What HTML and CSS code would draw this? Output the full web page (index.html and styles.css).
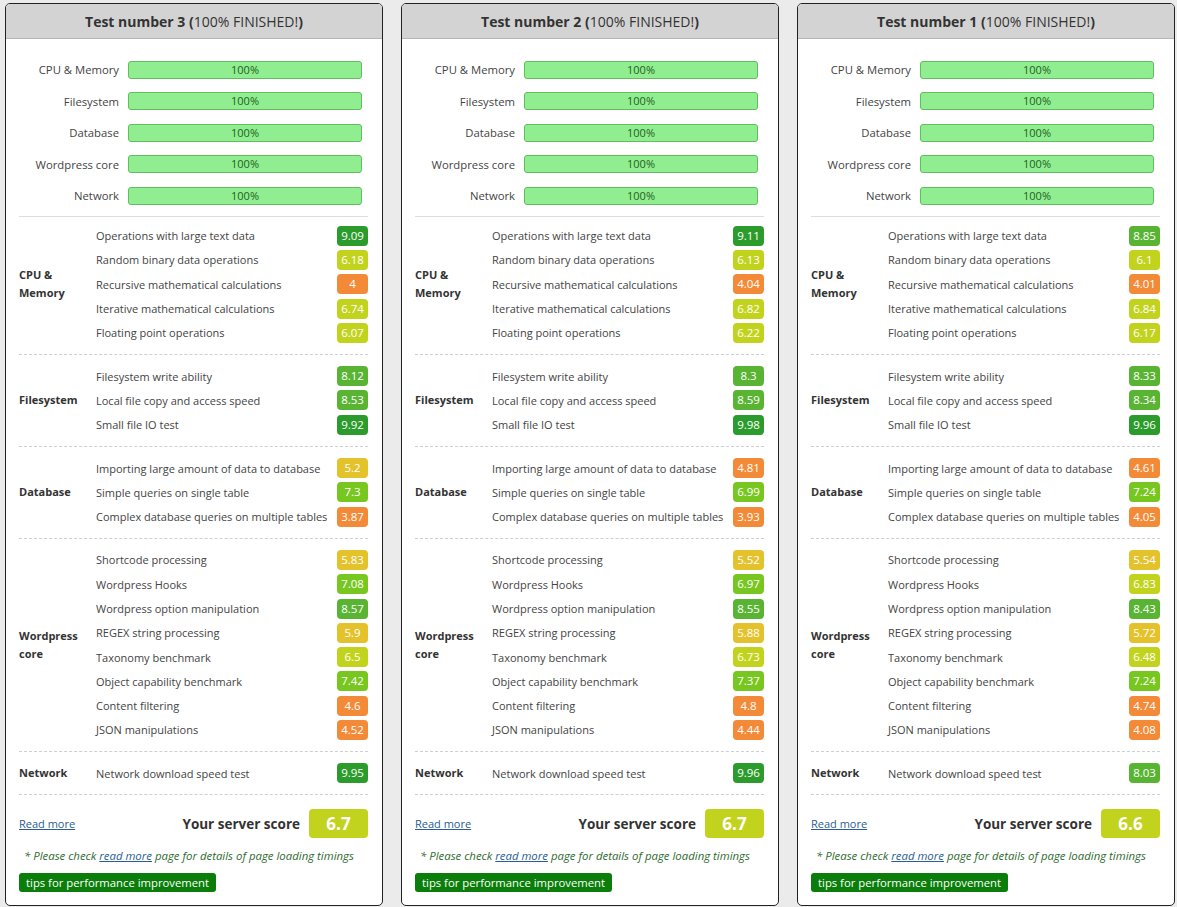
FILE: index.html
```html
<!DOCTYPE html>
<html lang="en">
<head>
    <meta charset="UTF-8">
    <title>Benchmark results</title>
    <link rel="stylesheet" href="styles.css">
</head>
<body>
<div class="tests">

    <!-- test 3 -->
    <div class="test">
        <div class="test-head"><b>Test number 3</b>&nbsp;<b>(</b>100% FINISHED!<b>)</b></div>
        <div class="test-body">
            <div class="progress">
                <div class="prog-row"><span class="prog-label">CPU &amp; Memory</span><div class="bar">100%</div></div>
                <div class="prog-row"><span class="prog-label">Filesystem</span><div class="bar">100%</div></div>
                <div class="prog-row"><span class="prog-label">Database</span><div class="bar">100%</div></div>
                <div class="prog-row"><span class="prog-label">Wordpress core</span><div class="bar">100%</div></div>
                <div class="prog-row"><span class="prog-label">Network</span><div class="bar">100%</div></div>
            </div>
            <div class="group first">
                <div class="cat">CPU &amp;<br>Memory</div>
                <div class="items">
                    <div class="row"><span>Operations with large text data</span><span class="score g9">9.09</span></div>
                    <div class="row"><span>Random binary data operations</span><span class="score g6">6.18</span></div>
                    <div class="row"><span>Recursive mathematical calculations</span><span class="score g4">4</span></div>
                    <div class="row"><span>Iterative mathematical calculations</span><span class="score g6">6.74</span></div>
                    <div class="row"><span>Floating point operations</span><span class="score g6">6.07</span></div>
                </div>
            </div>
            <div class="group">
                <div class="cat">Filesystem</div>
                <div class="items">
                    <div class="row"><span>Filesystem write ability</span><span class="score g8">8.12</span></div>
                    <div class="row"><span>Local file copy and access speed</span><span class="score g8">8.53</span></div>
                    <div class="row"><span>Small file IO test</span><span class="score g9">9.92</span></div>
                </div>
            </div>
            <div class="group">
                <div class="cat">Database</div>
                <div class="items">
                    <div class="row"><span>Importing large amount of data to database</span><span class="score g5">5.2</span></div>
                    <div class="row"><span>Simple queries on single table</span><span class="score g7">7.3</span></div>
                    <div class="row"><span>Complex database queries on multiple tables</span><span class="score g4">3.87</span></div>
                </div>
            </div>
            <div class="group">
                <div class="cat">Wordpress<br>core</div>
                <div class="items">
                    <div class="row"><span>Shortcode processing</span><span class="score g5">5.83</span></div>
                    <div class="row"><span>Wordpress Hooks</span><span class="score g7">7.08</span></div>
                    <div class="row"><span>Wordpress option manipulation</span><span class="score g8">8.57</span></div>
                    <div class="row"><span>REGEX string processing</span><span class="score g5">5.9</span></div>
                    <div class="row"><span>Taxonomy benchmark</span><span class="score g6">6.5</span></div>
                    <div class="row"><span>Object capability benchmark</span><span class="score g7">7.42</span></div>
                    <div class="row"><span>Content filtering</span><span class="score g4">4.6</span></div>
                    <div class="row"><span>JSON manipulations</span><span class="score g4">4.52</span></div>
                </div>
            </div>
            <div class="group">
                <div class="cat">Network</div>
                <div class="items">
                    <div class="row"><span>Network download speed test</span><span class="score g9">9.95</span></div>
                </div>
            </div>
            <div class="summary">
                <a href="#" class="read-more">Read more</a>
                <span class="total-label">Your server score</span>
                <span class="total g6">6.7</span>
            </div>
            <p class="note">* Please check <a href="#">read more</a> page for details of page loading timings</p>
            <a href="#" class="tips">tips for performance improvement</a>
        </div>
    </div>

    <!-- test 2 -->
    <div class="test">
        <div class="test-head"><b>Test number 2</b>&nbsp;<b>(</b>100% FINISHED!<b>)</b></div>
        <div class="test-body">
            <div class="progress">
                <div class="prog-row"><span class="prog-label">CPU &amp; Memory</span><div class="bar">100%</div></div>
                <div class="prog-row"><span class="prog-label">Filesystem</span><div class="bar">100%</div></div>
                <div class="prog-row"><span class="prog-label">Database</span><div class="bar">100%</div></div>
                <div class="prog-row"><span class="prog-label">Wordpress core</span><div class="bar">100%</div></div>
                <div class="prog-row"><span class="prog-label">Network</span><div class="bar">100%</div></div>
            </div>
            <div class="group first">
                <div class="cat">CPU &amp;<br>Memory</div>
                <div class="items">
                    <div class="row"><span>Operations with large text data</span><span class="score g9">9.11</span></div>
                    <div class="row"><span>Random binary data operations</span><span class="score g6">6.13</span></div>
                    <div class="row"><span>Recursive mathematical calculations</span><span class="score g4">4.04</span></div>
                    <div class="row"><span>Iterative mathematical calculations</span><span class="score g6">6.82</span></div>
                    <div class="row"><span>Floating point operations</span><span class="score g6">6.22</span></div>
                </div>
            </div>
            <div class="group">
                <div class="cat">Filesystem</div>
                <div class="items">
                    <div class="row"><span>Filesystem write ability</span><span class="score g8">8.3</span></div>
                    <div class="row"><span>Local file copy and access speed</span><span class="score g8">8.59</span></div>
                    <div class="row"><span>Small file IO test</span><span class="score g9">9.98</span></div>
                </div>
            </div>
            <div class="group">
                <div class="cat">Database</div>
                <div class="items">
                    <div class="row"><span>Importing large amount of data to database</span><span class="score g4">4.81</span></div>
                    <div class="row"><span>Simple queries on single table</span><span class="score g7">6.99</span></div>
                    <div class="row"><span>Complex database queries on multiple tables</span><span class="score g4">3.93</span></div>
                </div>
            </div>
            <div class="group">
                <div class="cat">Wordpress<br>core</div>
                <div class="items">
                    <div class="row"><span>Shortcode processing</span><span class="score g5">5.52</span></div>
                    <div class="row"><span>Wordpress Hooks</span><span class="score g7">6.97</span></div>
                    <div class="row"><span>Wordpress option manipulation</span><span class="score g8">8.55</span></div>
                    <div class="row"><span>REGEX string processing</span><span class="score g5">5.88</span></div>
                    <div class="row"><span>Taxonomy benchmark</span><span class="score g6">6.73</span></div>
                    <div class="row"><span>Object capability benchmark</span><span class="score g7">7.37</span></div>
                    <div class="row"><span>Content filtering</span><span class="score g4">4.8</span></div>
                    <div class="row"><span>JSON manipulations</span><span class="score g4">4.44</span></div>
                </div>
            </div>
            <div class="group">
                <div class="cat">Network</div>
                <div class="items">
                    <div class="row"><span>Network download speed test</span><span class="score g9">9.96</span></div>
                </div>
            </div>
            <div class="summary">
                <a href="#" class="read-more">Read more</a>
                <span class="total-label">Your server score</span>
                <span class="total g6">6.7</span>
            </div>
            <p class="note">* Please check <a href="#">read more</a> page for details of page loading timings</p>
            <a href="#" class="tips">tips for performance improvement</a>
        </div>
    </div>

    <!-- test 1 -->
    <div class="test">
        <div class="test-head"><b>Test number 1</b>&nbsp;<b>(</b>100% FINISHED!<b>)</b></div>
        <div class="test-body">
            <div class="progress">
                <div class="prog-row"><span class="prog-label">CPU &amp; Memory</span><div class="bar">100%</div></div>
                <div class="prog-row"><span class="prog-label">Filesystem</span><div class="bar">100%</div></div>
                <div class="prog-row"><span class="prog-label">Database</span><div class="bar">100%</div></div>
                <div class="prog-row"><span class="prog-label">Wordpress core</span><div class="bar">100%</div></div>
                <div class="prog-row"><span class="prog-label">Network</span><div class="bar">100%</div></div>
            </div>
            <div class="group first">
                <div class="cat">CPU &amp;<br>Memory</div>
                <div class="items">
                    <div class="row"><span>Operations with large text data</span><span class="score g8">8.85</span></div>
                    <div class="row"><span>Random binary data operations</span><span class="score g6">6.1</span></div>
                    <div class="row"><span>Recursive mathematical calculations</span><span class="score g4">4.01</span></div>
                    <div class="row"><span>Iterative mathematical calculations</span><span class="score g6">6.84</span></div>
                    <div class="row"><span>Floating point operations</span><span class="score g6">6.17</span></div>
                </div>
            </div>
            <div class="group">
                <div class="cat">Filesystem</div>
                <div class="items">
                    <div class="row"><span>Filesystem write ability</span><span class="score g8">8.33</span></div>
                    <div class="row"><span>Local file copy and access speed</span><span class="score g8">8.34</span></div>
                    <div class="row"><span>Small file IO test</span><span class="score g9">9.96</span></div>
                </div>
            </div>
            <div class="group">
                <div class="cat">Database</div>
                <div class="items">
                    <div class="row"><span>Importing large amount of data to database</span><span class="score g4">4.61</span></div>
                    <div class="row"><span>Simple queries on single table</span><span class="score g7">7.24</span></div>
                    <div class="row"><span>Complex database queries on multiple tables</span><span class="score g4">4.05</span></div>
                </div>
            </div>
            <div class="group">
                <div class="cat">Wordpress<br>core</div>
                <div class="items">
                    <div class="row"><span>Shortcode processing</span><span class="score g5">5.54</span></div>
                    <div class="row"><span>Wordpress Hooks</span><span class="score g6">6.83</span></div>
                    <div class="row"><span>Wordpress option manipulation</span><span class="score g8">8.43</span></div>
                    <div class="row"><span>REGEX string processing</span><span class="score g5">5.72</span></div>
                    <div class="row"><span>Taxonomy benchmark</span><span class="score g6">6.48</span></div>
                    <div class="row"><span>Object capability benchmark</span><span class="score g7">7.24</span></div>
                    <div class="row"><span>Content filtering</span><span class="score g4">4.74</span></div>
                    <div class="row"><span>JSON manipulations</span><span class="score g4">4.08</span></div>
                </div>
            </div>
            <div class="group">
                <div class="cat">Network</div>
                <div class="items">
                    <div class="row"><span>Network download speed test</span><span class="score g8">8.03</span></div>
                </div>
            </div>
            <div class="summary">
                <a href="#" class="read-more">Read more</a>
                <span class="total-label">Your server score</span>
                <span class="total g6">6.6</span>
            </div>
            <p class="note">* Please check <a href="#">read more</a> page for details of page loading timings</p>
            <a href="#" class="tips">tips for performance improvement</a>
        </div>
    </div>

</div>
</body>
</html>
```

FILE: styles.css
```css
body {
    margin: 0;
    background: #ebebeb;
    font-family: "Open Sans", "Noto Sans", sans-serif;
    font-size: 11px;
    color: #444;
}
.tests {
    display: flex;
    gap: 18px;
    padding: 3px 0 0 5px;
}
.test {
    width: 378px;
    height: 903px;
    box-sizing: border-box;
    background: #fff;
    border: 1px solid #222;
    border-radius: 5px;
    overflow: hidden;
}
.test-head {
    height: 34px;
    background: #d3d3d3;
    border-bottom: 1px solid #b5b5b5;
    display: flex;
    align-items: center;
    justify-content: center;
    font-size: 14px;
    color: #333;
}
.test-body {
    padding: 0 14px 0 13px;
}

/* progress bars */
.progress {
    padding: 15px 0 4px;
}
.prog-row {
    display: flex;
    align-items: center;
    height: 31.5px;
}
.prog-label {
    width: 100px;
    text-align: right;
    margin-right: 9px;
    font-size: 11.3px;
    color: #444;
}
.bar {
    width: 232px;
    height: 16px;
    line-height: 16px;
    background: #90ee90;
    border: 1px solid #5fbf5f;
    border-radius: 3px;
    text-align: center;
    color: #1f5f1f;
}

/* result groups */
.group {
    display: flex;
    align-items: center;
    padding: 9px 0;
    border-top: 1px dashed #cfcfcf;
}
.group.first {
    padding-top: 7px;
    border-top: 1px solid #ddd;
}
.cat {
    width: 77px;
    font-weight: bold;
    color: #333;
    line-height: 18px;
}
.items {
    flex: 1;
}
.row {
    display: flex;
    align-items: center;
    justify-content: space-between;
    height: 24.3px;
}
.score {
    min-width: 23px;
    height: 20px;
    line-height: 20px;
    padding: 0 4px;
    border-radius: 4px;
    text-align: center;
    color: #fff;
    font-size: 11.5px;
}
.g9 { background: #2b9b2b; }
.g8 { background: #5ab433; }
.g7 { background: #78c620; }
.g6 { background: #c2d31e; }
.g5 { background: #e4c22c; }
.g4 { background: #f38a38; }

/* footer */
.summary {
    display: flex;
    align-items: center;
    padding: 14px 0 0;
    border-top: 1px dashed #cfcfcf;
}
.read-more {
    flex: 1;
    color: #2a5d92;
}
.total-label {
    font-size: 13.5px;
    font-weight: bold;
    color: #333;
    margin-right: 9px;
}
.total {
    width: 59px;
    height: 29px;
    line-height: 29px;
    border-radius: 4px;
    text-align: center;
    color: #fff;
    font-size: 17px;
    font-weight: bold;
}
.note {
    margin: 10px 0 10px;
    padding-left: 5px;
    font-size: 11.4px;
    font-style: italic;
    color: #2f6b2f;
}
.note a {
    color: #2a5d92;
}
.tips {
    display: inline-block;
    padding: 0 7px;
    height: 19px;
    line-height: 19px;
    background: #0a7d0a;
    border-radius: 3px;
    color: #fff;
    font-size: 11.3px;
    text-decoration: none;
}
```
